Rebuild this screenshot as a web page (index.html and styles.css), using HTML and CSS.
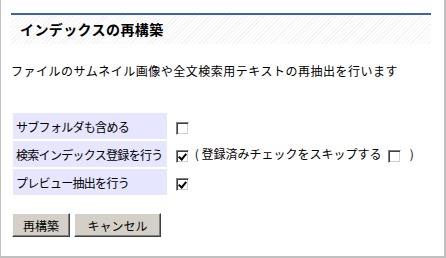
FILE: index.html
```html
<!DOCTYPE html>
<html lang="ja">
<head>
  <meta charset="UTF-8">
  <meta name="viewport" content="width=device-width, initial-scale=1.0">
  <title>インデックスの再構築</title>
  <link rel="stylesheet" href="styles.css">
</head>
<body>
  <div class="frame">
    <h1 class="title">インデックスの再構築</h1>
    <p class="desc">ファイルのサムネイル画像や全文検索用テキストの再抽出を行います</p>
    <form id="rebuildForm">
      <table class="options">
        <tr>
          <td class="label">サブフォルダも含める</td>
          <td class="value"><input type="checkbox" class="chk" name="subfolder"></td>
        </tr>
        <tr>
          <td class="label">検索インデックス登録を行う</td>
          <td class="value"><input type="checkbox" class="chk" name="index" checked> <span class="note">( 登録済みチェックをスキップする <input type="checkbox" class="chk" name="skip"> )</span></td>
        </tr>
        <tr>
          <td class="label">プレビュー抽出を行う</td>
          <td class="value"><input type="checkbox" class="chk" name="preview" checked></td>
        </tr>
      </table>
      <div class="buttons">
        <button type="button" class="btn btn-run">再構築</button>
        <button type="button" class="btn btn-cancel">キャンセル</button>
      </div>
    </form>
  </div>
</body>
</html>
```

FILE: styles.css
```css
body {
  margin: 0;
  font-family: "Noto Sans CJK JP", "DejaVu Sans", sans-serif;
  font-size: 12px;
  color: #000;
  background: #fff;
}
.frame {
  width: 446px;
  height: 258px;
  border-left: 1px solid #c0c0c0;
  border-right: 2px solid #c0c0c0;
  border-bottom: 2px solid #c0c0c0;
  padding: 13px 0 0 10px;
  box-sizing: border-box;
}
.title {
  margin: 0;
  width: 420px;
  height: 31px;
  box-sizing: border-box;
  border-top: 2px solid #3d62b3;
  padding: 0 0 0 9px;
  font-size: 14px;
  font-weight: bold;
  letter-spacing: 0.4px;
  line-height: 29px;
  background: repeating-linear-gradient(-45deg, #ffffff 0, #ffffff 2px, #f3f3f3 2px, #f3f3f3 3px);
}
.desc {
  margin: 19px 0 0 0;
  line-height: 16px;
  letter-spacing: 0.5px;
}
.options {
  margin-top: 32px;
  margin-left: 0;
  border-collapse: separate;
  border-spacing: 2px;
}
.options td {
  height: 26px;
  padding: 0 3px;
  vertical-align: middle;
  white-space: nowrap;
}
.label {
  width: 148px;
  letter-spacing: -0.7px;
  background: #e6e6fe;
}
.chk {
  appearance: none;
  -webkit-appearance: none;
  width: 13px;
  height: 13px;
  margin: 0 3px 0 4px;
  vertical-align: middle;
  position: relative;
  box-sizing: border-box;
  border-top: 1px solid #808080;
  border-left: 1px solid #808080;
  border-right: 1px solid #ffffff;
  border-bottom: 1px solid #ffffff;
  box-shadow: inset 1px 1px 0 #404040, inset -1px -1px 0 #d4d0c8;
  background: #fff;
}
.chk:checked::after {
  content: "";
  position: absolute;
  left: 3px;
  top: 1px;
  width: 3px;
  height: 6px;
  border-right: 2px solid #000;
  border-bottom: 2px solid #000;
  transform: rotate(40deg);
}
.note .chk {
  margin: 0 6px 0 4px;
}
.buttons {
  display: flex;
  gap: 4px;
  margin-top: 16px;
  margin-left: 1px;
}
.btn {
  height: 24px;
  padding: 0;
  font-family: "Noto Sans CJK JP", "DejaVu Sans", sans-serif;
  font-size: 12px;
  color: #000;
  background: #d4d0c8;
  border-top: 1px solid #ffffff;
  border-left: 1px solid #ffffff;
  border-right: 1px solid #404040;
  border-bottom: 1px solid #404040;
  box-shadow: inset -1px -1px 0 #808080;
  border-radius: 0;
}
.btn-run {
  width: 58px;
}
.btn-cancel {
  width: 87px;
}
```
